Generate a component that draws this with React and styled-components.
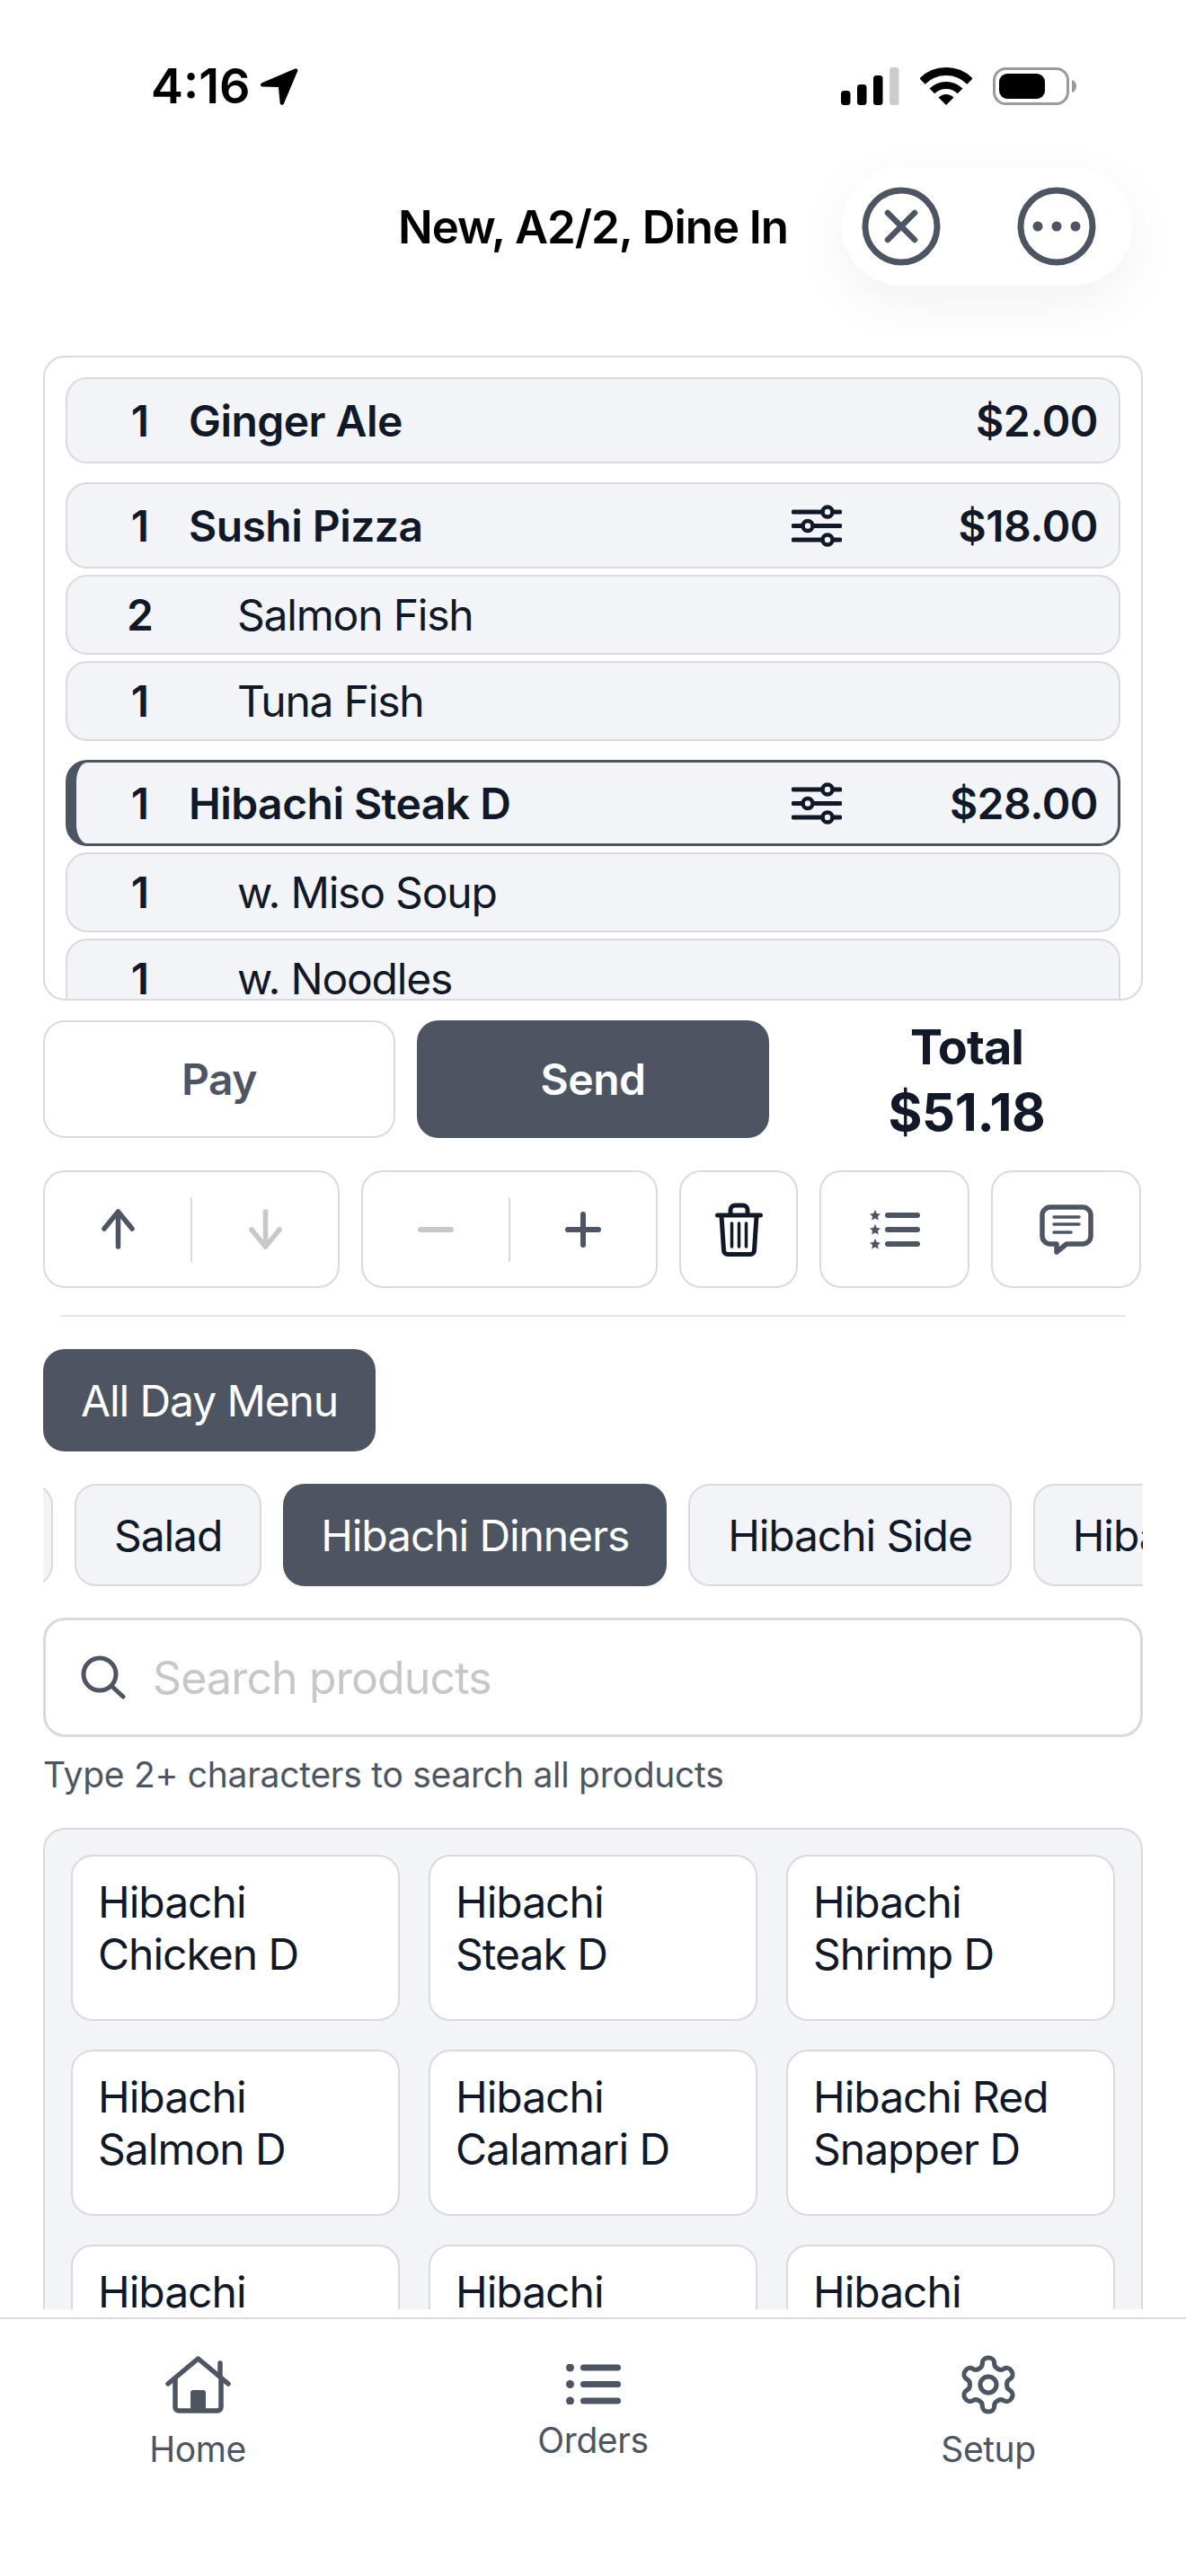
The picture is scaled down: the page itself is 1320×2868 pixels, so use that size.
import styled, { createGlobalStyle } from "styled-components";

const GRAY_600 = "#4e5562";
const GRAY_900 = "#111827";
const LINE = "#d8dade";
const SOFT = "#f2f4f8";

const GlobalStyle = createGlobalStyle`
  html, body {
    margin: 0;
    padding: 0;
    background: #fff;
  }
  * {
    box-sizing: border-box;
  }
  body {
    font-family: Inter, "Liberation Sans", sans-serif;
    color: ${GRAY_900};
  }
`;

const Page = styled.div`
  width: 1320px;
  height: 2868px;
  overflow: hidden;
  display: flex;
  flex-direction: column;
  background: #fff;
`;

const StatusBar = styled.div`
  height: 186px;
  flex: none;
  padding: 75px 122px 0 168px;
  display: flex;
  justify-content: space-between;
  align-items: flex-start;
`;

const StatusGroup = styled.div`
  display: flex;
  align-items: center;
  gap: ${(p) => p.$gap}px;
  height: 42px;
`;

const Time = styled.span`
  font-size: 54px;
  font-weight: 600;
  line-height: 42px;
  color: #000;
`;

const Header = styled.header`
  height: 132px;
  flex: none;
  margin-bottom: 78px;
  display: grid;
  grid-template-columns: 1fr auto 1fr;
  align-items: center;
`;

const Title = styled.h1`
  grid-column: 2;
  margin: 0;
  font-size: 51px;
  font-weight: 600;
  letter-spacing: -1.05px;
  color: #000;
  white-space: nowrap;
`;

const HeaderPill = styled.div`
  grid-column: 3;
  justify-self: end;
  margin-right: 60px;
  width: 323px;
  height: 132px;
  border-radius: 66px;
  background: #fff;
  box-shadow: 0 18px 60px rgba(0, 0, 0, 0.06);
  display: flex;
  align-items: center;
  justify-content: space-between;
  padding: 0 40px 0 22px;
`;

const Content = styled.main`
  height: 2175px;
  flex: none;
  padding: 0 48px;
  overflow: hidden;
  display: flex;
  flex-direction: column;
`;

const OrderPanel = styled.section`
  height: 718px;
  flex: none;
  border: 2px solid ${LINE};
  border-radius: 24px;
  padding: 22px 23px 0;
  overflow: hidden;
  display: flex;
  flex-direction: column;
  gap: 21px;
`;

const OrderGroup = styled.div`
  display: flex;
  flex-direction: column;
  gap: 7px;
  flex: none;
`;

const Row = styled.div`
  height: ${(p) => (p.$sub ? 89 : 96)}px;
  display: flex;
  align-items: center;
  flex: none;
  background: ${SOFT};
  border-radius: 24px;
  border: ${(p) => (p.$selected ? `3px solid ${GRAY_600}` : `2px solid ${LINE}`)};
  border-left: ${(p) => (p.$selected ? `12px solid ${GRAY_600}` : `2px solid ${LINE}`)};
  padding-left: ${(p) => (p.$selected ? 39 : 49)}px;
  padding-right: ${(p) => (p.$selected ? 22 : 23)}px;
  font-size: 48px;
`;

const Qty = styled.span`
  width: 64px;
  flex: none;
  text-align: center;
  font-weight: 600;
`;

const ItemName = styled.span`
  flex: 1;
  margin-left: ${(p) => (p.$sub ? 76 : 22)}px;
  font-weight: ${(p) => (p.$sub ? 400 : 600)};
  letter-spacing: ${(p) => (p.$sub ? -1.2 : -0.55)}px;
  white-space: nowrap;
`;

const Price = styled.span`
  width: 285px;
  flex: none;
  text-align: right;
  font-weight: 600;
  letter-spacing: -0.5px;
  white-space: nowrap;
`;

const ActionRow = styled.div`
  margin-top: 22px;
  display: grid;
  grid-template-columns: repeat(3, 1fr);
  grid-template-rows: 131px;
  gap: 24px;
  height: 131px;
  flex: none;
`;

const ActionButton = styled.button`
  font: inherit;
  font-size: 48px;
  font-weight: 600;
  letter-spacing: -0.5px;
  border-radius: 24px;
  padding: 0;
  color: ${(p) => (p.$primary ? "#fff" : GRAY_600)};
  background: ${(p) => (p.$primary ? GRAY_600 : "#fff")};
  border: ${(p) => (p.$primary ? "none" : `2px solid ${LINE}`)};
`;

const Total = styled.div`
  align-self: center;
  font-weight: 700;
  line-height: 73px;
  text-align: center;
  color: ${GRAY_900};
`;

const TotalLabel = styled.div`
  font-size: 54px;
  letter-spacing: -1px;
`;

const TotalAmount = styled.div`
  font-size: 58px;
  letter-spacing: -0.3px;
`;

const ToolRow = styled.div`
  margin-top: 36px;
  height: 131px;
  flex: none;
  display: flex;
  gap: 24px;
`;

const ToolBox = styled.div`
  width: ${(p) => p.$width}px;
  flex: none;
  border: 2px solid ${LINE};
  border-radius: 24px;
  display: flex;
  align-items: center;
  justify-content: center;
`;

const ToolCell = styled.div`
  flex: 1;
  display: flex;
  align-items: center;
  justify-content: center;
`;

const ToolDivider = styled.div`
  width: 2px;
  height: 72px;
  flex: none;
  background: ${LINE};
`;

const Rule = styled.hr`
  margin: 30px 19px 0;
  height: 2px;
  flex: none;
  border: none;
  background: #e3e5e8;
`;

const Chip = styled.div`
  height: 114px;
  flex: none;
  display: flex;
  align-items: center;
  border-radius: 24px;
  padding: 0 42px;
  font-size: 48px;
  letter-spacing: -1.1px;
  white-space: nowrap;
  width: ${(p) => (p.$width ? `${p.$width}px` : "auto")};
  color: ${(p) => (p.$active ? "#fff" : GRAY_900)};
  background: ${(p) => (p.$active ? GRAY_600 : SOFT)};
  border: ${(p) => (p.$active ? "none" : `2px solid ${LINE}`)};
`;

const MenuRow = styled.div`
  margin-top: 36px;
  display: flex;
  flex: none;
`;

const ChipScroller = styled.div`
  margin-top: 36px;
  flex: none;
  overflow: hidden;
`;

const ChipTrack = styled.div`
  display: flex;
  gap: 24px;
  margin-left: ${(p) => p.$scroll}px;
`;

const SearchBox = styled.div`
  margin-top: 35px;
  height: 133px;
  flex: none;
  border: 3px solid ${LINE};
  border-radius: 24px;
  display: flex;
  align-items: center;
  padding-left: 39px;
  gap: 30px;
`;

const Placeholder = styled.span`
  font-size: 50px;
  letter-spacing: -0.85px;
  color: #c6c7ca;
`;

const Hint = styled.p`
  margin: 20px 0 0;
  height: 44px;
  flex: none;
  font-size: 39px;
  letter-spacing: -0.26px;
  line-height: 44px;
  color: ${GRAY_600};
`;

const ProductPanel = styled.section`
  margin-top: 37px;
  flex: 1;
  background: ${SOFT};
  border: 2px solid ${LINE};
  border-bottom: none;
  border-radius: 24px 24px 0 0;
  padding: 28px 29px 0;
  display: grid;
  grid-template-columns: repeat(3, 1fr);
  grid-auto-rows: 185px;
  gap: 32px;
  overflow: hidden;
`;

const ProductCard = styled.div`
  background: #fff;
  border: 2px solid ${LINE};
  border-radius: 24px;
  padding: 22px 28px;
  font-size: 48px;
  letter-spacing: -1px;
  line-height: 58px;
`;

const TabBar = styled.nav`
  margin-top: 9px;
  border-top: 2px solid ${LINE};
  padding-top: 38px;
  height: 172px;
  display: grid;
  grid-template-columns: repeat(3, 1fr);
  align-items: center;
  flex: none;
`;

const Tab = styled.div`
  display: flex;
  flex-direction: column;
  align-items: center;
  gap: 17px;
  font-size: 39px;
  letter-spacing: -0.4px;
  line-height: 46px;
  color: ${GRAY_600};
`;

const GearSvg = styled.svg`
  margin: -4px;
`;

const CircleIcon = ({ children }) => (
  <svg width="88" height="88" viewBox="0 0 88 88" fill="none" stroke={GRAY_600} strokeWidth="7" strokeLinecap="round">
    <circle cx="44" cy="44" r="40" />
    {children}
  </svg>
);

const SlidersIcon = () => (
  <svg width="56" height="47" viewBox="0 0 56 47" fill="none" stroke={GRAY_900} strokeWidth="4.5" strokeLinecap="round">
    <path d="M2 8H34M46 8H54M2 23.5H12M24 23.5H54M2 39H34M46 39H54" strokeWidth="5" />
    <circle cx="40" cy="8" r="5.5" />
    <circle cx="18" cy="23.5" r="5.5" />
    <circle cx="40" cy="39" r="5.5" />
  </svg>
);

const ArrowIcon = ({ down }) => (
  <svg width="37" height="45" viewBox="0 0 37 45" fill="none" stroke={down ? "#c8c8c8" : GRAY_600} strokeWidth="5.5" strokeLinecap="round" strokeLinejoin="round">
    {down ? <path d="M18.5 3V42M3 23L18.5 42L34 23" /> : <path d="M18.5 42V3M3 22L18.5 3L34 22" />}
  </svg>
);

const MinusIcon = () => (
  <svg width="40" height="8" viewBox="0 0 40 8" fill="none" stroke="#c8c8c8" strokeWidth="6" strokeLinecap="round">
    <path d="M3 4H37" />
  </svg>
);

const PlusIcon = () => (
  <svg width="40" height="40" viewBox="0 0 40 40" fill="none" stroke={GRAY_600} strokeWidth="6" strokeLinecap="round">
    <path d="M3 20H37M20 3V37" />
  </svg>
);

const TrashIcon = () => (
  <svg width="53" height="60" viewBox="0 0 53 60" fill="none" stroke={GRAY_900} strokeWidth="5" strokeLinecap="round" strokeLinejoin="round">
    <path d="M2.5 14H50.5" />
    <path d="M17 13V8a5 5 0 0 1 5-5h9a5 5 0 0 1 5 5v5" />
    <path d="M7 15l2.5 38a4.5 4.5 0 0 0 4.5 4.5h25a4.5 4.5 0 0 0 4.5-4.5L46 15" />
    <path d="M18.5 23V49M26.5 23V49M34.5 23V49" strokeWidth="3.5" />
  </svg>
);

const STAR = "M6 0L7.8 3.9L12 4.4L8.9 7.3L9.7 11.5L6 9.4L2.3 11.5L3.1 7.3L0 4.4L4.2 3.9Z";

const StarListIcon = () => (
  <svg width="56" height="44" viewBox="0 0 56 44" fill={GRAY_600}>
    {[0, 16, 32].map((y) => (
      <g key={y}>
        <path d={STAR} transform={`translate(0 ${y})`} />
        <rect x="17" y={y + 3} width="39" height="6" rx="3" />
      </g>
    ))}
  </svg>
);

const CommentIcon = () => (
  <svg width="60" height="56" viewBox="0 0 60 56" fill="none" stroke={GRAY_600} strokeWidth="5.5" strokeLinecap="round" strokeLinejoin="round">
    <path d="M12 3H48a9 9 0 0 1 9 9V35a9 9 0 0 1-9 9H30L19 53V44H12a9 9 0 0 1-9-9V12a9 9 0 0 1 9-9Z" />
    <path d="M16 14H44M16 22H44M16 31H35" strokeWidth="3.5" />
  </svg>
);

const SearchIcon = () => (
  <svg width="50" height="49" viewBox="0 0 50 49" fill="none" stroke={GRAY_600} strokeWidth="5" strokeLinecap="round">
    <circle cx="21" cy="21" r="18" />
    <path d="M34 34L47 46" />
  </svg>
);

const HomeIcon = () => (
  <svg width="73" height="64" viewBox="0 0 73 64" fill="none" stroke={GRAY_600} strokeWidth="5.5" strokeLinecap="round" strokeLinejoin="round">
    <path d="M3 31L36.5 3L70 31" />
    <path d="M11 26V57a4 4 0 0 0 4 4H58a4 4 0 0 0 4-4V26" />
    <path d="M61 8V23" />
    <path d="M28 62V41a3 3 0 0 1 3-3H42a3 3 0 0 1 3 3V62Z" fill={GRAY_600} stroke="none" />
  </svg>
);

const OrdersIcon = () => (
  <svg width="61" height="45" viewBox="0 0 61 45" fill={GRAY_600}>
    {[4, 22.5, 41].map((y) => (
      <g key={y}>
        <circle cx="4.5" cy={y} r="4.5" />
        <rect x="16" y={y - 3.5} width="45" height="7" rx="3.5" />
      </g>
    ))}
  </svg>
);

const GearIcon = () => (
  <GearSvg width="72" height="72" viewBox="0 0 24 24" fill="none" stroke={GRAY_600} strokeWidth="1.7" strokeLinecap="round" strokeLinejoin="round">
    <path d="M12.22 2h-.44a2 2 0 0 0-2 2v.18a2 2 0 0 1-1 1.73l-.43.25a2 2 0 0 1-2 0l-.15-.08a2 2 0 0 0-2.73.73l-.22.38a2 2 0 0 0 .73 2.73l.15.1a2 2 0 0 1 1 1.72v.51a2 2 0 0 1-1 1.74l-.15.09a2 2 0 0 0-.73 2.73l.22.38a2 2 0 0 0 2.73.73l.15-.08a2 2 0 0 1 2 0l.43.25a2 2 0 0 1 1 1.73V20a2 2 0 0 0 2 2h.44a2 2 0 0 0 2-2v-.18a2 2 0 0 1 1-1.73l.43-.25a2 2 0 0 1 2 0l.15.08a2 2 0 0 0 2.73-.73l.22-.39a2 2 0 0 0-.73-2.73l-.15-.08a2 2 0 0 1-1-1.74v-.5a2 2 0 0 1 1-1.74l.15-.09a2 2 0 0 0 .73-2.73l-.22-.38a2 2 0 0 0-2.73-.73l-.15.08a2 2 0 0 1-2 0l-.43-.25a2 2 0 0 1-1-1.73V4a2 2 0 0 0-2-2z" />
    <circle cx="12" cy="12" r="3" />
  </GearSvg>
);

const orderGroups = [
  [{ qty: 1, name: "Ginger Ale", price: "$2.00" }],
  [
    { qty: 1, name: "Sushi Pizza", price: "$18.00", options: true },
    { qty: 2, name: "Salmon Fish", sub: true },
    { qty: 1, name: "Tuna Fish", sub: true },
  ],
  [
    { qty: 1, name: "Hibachi Steak D", price: "$28.00", options: true, selected: true },
    { qty: 1, name: "w. Miso Soup", sub: true },
    { qty: 1, name: "w. Noodles", sub: true },
  ],
];

const products = [
  ["Hibachi", "Chicken D"],
  ["Hibachi", "Steak D"],
  ["Hibachi", "Shrimp D"],
  ["Hibachi", "Salmon D"],
  ["Hibachi", "Calamari D"],
  ["Hibachi Red", "Snapper D"],
  ["Hibachi"],
  ["Hibachi"],
  ["Hibachi"],
];

export default function App() {
  return (
    <Page>
      <GlobalStyle />
      <StatusBar>
        <StatusGroup $gap={11}>
          <Time>4:16</Time>
          <svg width="42" height="41" viewBox="2 2 38 38">
            <path d="M3 17L37 2.500a2 2 0 0 1 2.700 2.600L25.500 38.500c-.9 2-3.600 1.600-3.900-.6L20 21.500 3.500 21c-2.300-.1-2.700-3-.5-4Z" fill="#000" />
          </svg>
        </StatusGroup>
        <StatusGroup $gap={23}>
          <svg width="65" height="42" viewBox="0 0 65 42">
            <rect x="0" y="26" width="10.500" height="16" rx="3.500" />
            <rect x="18" y="19" width="10.500" height="23" rx="3.500" />
            <rect x="36" y="9" width="10.500" height="33" rx="3.500" />
            <rect x="54" y="0" width="10.500" height="42" rx="3.500" fill="#cccccc" />
          </svg>
          <svg width="58" height="42" viewBox="0 0 58 42" fill="none" stroke="#000">
            <path d="M2.500 15.500A37.500 37.500 0 0 1 55.500 15.500" strokeWidth="9" />
            <path d="M13.400 26.400A22 22 0 0 1 44.600 26.400" strokeWidth="8" />
            <path d="M29 42L20.500 33.500A12 12 0 0 1 37.500 33.500Z" fill="#000" stroke="none" />
          </svg>
          <svg width="93" height="42" viewBox="0 0 93 42">
            <rect x="1.500" y="1.500" width="82" height="39" rx="13" fill="none" stroke="#9a9a9a" strokeWidth="3" />
            <rect x="7" y="7" width="51" height="28" rx="9" fill="#000" />
            <path d="M88 14c3 1 5 3.500 5 7s-2 6-5 7Z" fill="#9a9a9a" />
          </svg>
        </StatusGroup>
      </StatusBar>

      <Header>
        <Title>New, A2/2, Dine In</Title>
        <HeaderPill>
          <CircleIcon>
            <path d="M29 29L59 59M59 29L29 59" strokeWidth="6.500" />
          </CircleIcon>
          <CircleIcon>
            <g fill={GRAY_600} stroke="none">
              <circle cx="23" cy="44" r="5.500" />
              <circle cx="44" cy="44" r="5.500" />
              <circle cx="65" cy="44" r="5.500" />
            </g>
          </CircleIcon>
        </HeaderPill>
      </Header>

      <Content>
        <OrderPanel>
          {orderGroups.map((group) => (
            <OrderGroup key={group[0].name}>
              {group.map((item) => (
                <Row key={item.name} $sub={item.sub} $selected={item.selected}>
                  <Qty>{item.qty}</Qty>
                  <ItemName $sub={item.sub}>{item.name}</ItemName>
                  {item.options && <SlidersIcon />}
                  {item.price && <Price>{item.price}</Price>}
                </Row>
              ))}
            </OrderGroup>
          ))}
        </OrderPanel>

        <ActionRow>
          <ActionButton>Pay</ActionButton>
          <ActionButton $primary>Send</ActionButton>
          <Total>
            <TotalLabel>Total</TotalLabel>
            <TotalAmount>$51.18</TotalAmount>
          </Total>
        </ActionRow>

        <ToolRow>
          <ToolBox $width={330}>
            <ToolCell>
              <ArrowIcon />
            </ToolCell>
            <ToolDivider />
            <ToolCell>
              <ArrowIcon down />
            </ToolCell>
          </ToolBox>
          <ToolBox $width={330}>
            <ToolCell>
              <MinusIcon />
            </ToolCell>
            <ToolDivider />
            <ToolCell>
              <PlusIcon />
            </ToolCell>
          </ToolBox>
          <ToolBox $width={132}>
            <TrashIcon />
          </ToolBox>
          <ToolBox $width={167}>
            <StarListIcon />
          </ToolBox>
          <ToolBox $width={167}>
            <CommentIcon />
          </ToolBox>
        </ToolRow>

        <Rule />

        <MenuRow>
          <Chip $active>All Day Menu</Chip>
        </MenuRow>

        <ChipScroller>
          <ChipTrack $scroll={-89}>
            <Chip $width={100} />
            <Chip>Salad</Chip>
            <Chip $active>Hibachi Dinners</Chip>
            <Chip>Hibachi Side</Chip>
            <Chip>Hibachi</Chip>
          </ChipTrack>
        </ChipScroller>

        <SearchBox>
          <SearchIcon />
          <Placeholder>Search products</Placeholder>
        </SearchBox>
        <Hint>Type 2+ characters to search all products</Hint>

        <ProductPanel>
          {products.map((lines, i) => (
            <ProductCard key={i}>
              {lines.map((line) => (
                <div key={line}>{line}</div>
              ))}
            </ProductCard>
          ))}
        </ProductPanel>
      </Content>

      <TabBar>
        <Tab>
          <HomeIcon />
          Home
        </Tab>
        <Tab>
          <OrdersIcon />
          Orders
        </Tab>
        <Tab>
          <GearIcon />
          Setup
        </Tab>
      </TabBar>
    </Page>
  );
}
